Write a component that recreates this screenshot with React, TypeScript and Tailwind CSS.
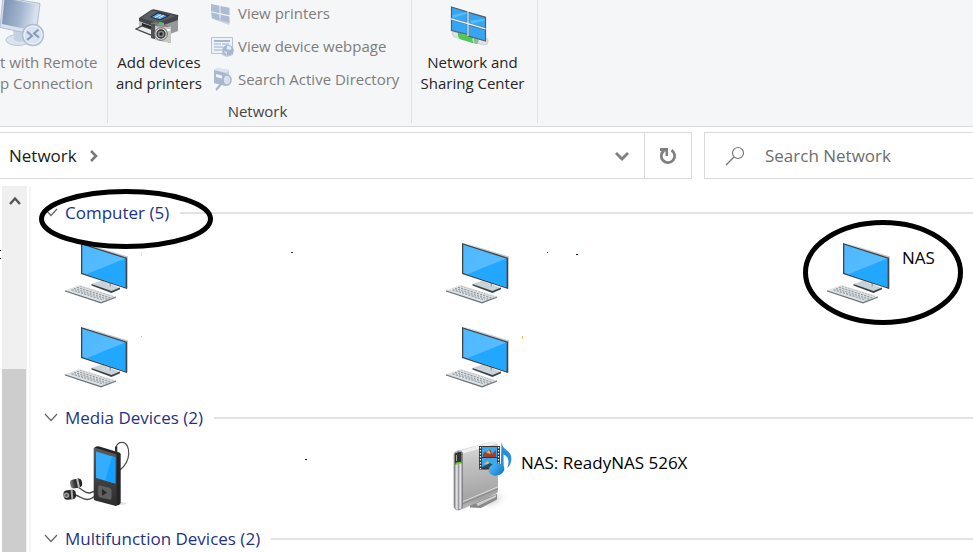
import type { ReactNode } from 'react'

interface Speck {
  x: number
  y: number
  w: number
  h: number
  color: string
}

interface DeviceItem {
  id: string
  icon: 'computer' | 'player' | 'server'
  label?: string
  circled?: boolean
  specks?: Speck[]
}

interface DeviceGroup {
  title: string
  count: number
  circled?: boolean
  items: DeviceItem[]
}

const groups: DeviceGroup[] = [
  {
    title: 'Computer',
    count: 5,
    circled: true,
    items: [
      {
        id: 'pc-1',
        icon: 'computer',
        specks: [
          { x: 79, y: 21, w: 1, h: 4, color: '#ffdf9e' },
          { x: 229, y: 21, w: 2, h: 1, color: '#1f1f6b' },
        ],
      },
      {
        id: 'pc-2',
        icon: 'computer',
        specks: [
          { x: 104, y: 21, w: 1, h: 1, color: '#5a1a00' },
          { x: 133, y: 23, w: 2, h: 1, color: '#200000' },
        ],
      },
      { id: 'pc-3', icon: 'computer', label: 'NAS', circled: true },
      { id: 'pc-4', icon: 'computer', specks: [{ x: 79, y: 21, w: 1, h: 1, color: '#f0b088' }] },
      { id: 'pc-5', icon: 'computer', specks: [{ x: 79, y: 21, w: 1, h: 3, color: '#ffb65c' }] },
    ],
  },
  {
    title: 'Media Devices',
    count: 2,
    items: [
      { id: 'media-1', icon: 'player', specks: [{ x: 243, y: 23, w: 2, h: 1, color: '#1a1a1a' }] },
      { id: 'media-2', icon: 'server', label: 'NAS: ReadyNAS 526X' },
    ],
  },
  { title: 'Multifunction Devices', count: 2, items: [] },
]

function ComputerIcon() {
  return (
    <svg viewBox="0 0 72 72" className="size-[72px] shrink-0 overflow-visible" aria-hidden="true">
      <defs>
        <linearGradient id="pcScreen" x1="0" y1="0" x2="1" y2="1">
          <stop offset="0" stopColor="#4db8ff" />
          <stop offset="1" stopColor="#5cbeff" />
        </linearGradient>
      </defs>
      <path d="M20.500 4.500 66 18.500V50.500L64 51V20.500Z" fill="#c3c8cb" />
      <path d="m29.500 46 10-3.500 18.500 7.500-8.500 4Z" fill="#c9d3d8" />
      <path d="m29.500 46 20 7 8.500-3.500v1.700L49.500 55 29.500 47.500Z" fill="#39434a" />
      <path d="m44 42 6 2v5l-4-1Z" fill="#d8dcde" />
      <path d="M47.500 43.500h1.500v5h-1.500z" fill="#98a1a6" />
      <path d="M19 5 65 19.700V51L19 36Z" fill="#3e464c" />
      <path d="m20.300 6.800 43 13.800v28.600l-43-14.200Z" fill="url(#pcScreen)" />
      <path d="M63.300 20.600v28.600l-39-12.900Z" fill="#22a7ff" />
      <path d="m3 52.200 14.500-5.200 36.500 11.500-15 5.500Z" fill="#dfe2e4" />
      <path d="m3 52.200 36 11.800 15-5.500v1.300l-15 5.700L3 53.500Z" fill="#6d777e" />
      <g stroke="#8e979d" strokeWidth="1.200" strokeDasharray="2.200 1.100" fill="none">
        <path d="m15 49.300 34.500 11" />
        <path d="m12 50.500 33.500 10.800" />
        <path d="m9.500 51.700 32 10.300" />
      </g>
      <path d="m18 48.200 33 10.300" stroke="#a9b0b5" strokeWidth=".8" strokeDasharray="2 1" />
    </svg>
  )
}

function PlayerIcon() {
  return (
    <svg viewBox="0 0 72 72" className="size-[72px] shrink-0 overflow-visible" aria-hidden="true">
      <defs>
        <linearGradient id="playerBody" x1="0" y1="0" x2="0" y2="1">
          <stop offset="0" stopColor="#5a5a5a" />
          <stop offset="1" stopColor="#2c2c2c" />
        </linearGradient>
        <linearGradient id="playerBud" x1="0" y1="0" x2="1" y2="0">
          <stop offset="0" stopColor="#8c8c8c" />
          <stop offset="0.400" stopColor="#333" />
          <stop offset="1" stopColor="#222" />
        </linearGradient>
      </defs>
      <ellipse cx="58" cy="60.500" rx="7" ry="1.500" fill="#e4e4e4" />
      <path d="M54 8V4.500C55 0 58-.6 60-.6c5 0 7 6 6.700 11.500C66.500 18 62 23.500 58 27" fill="none" stroke="#4b4b4b" strokeWidth="1.200" />
      <path d="m32 5.500 2-2 2.500-.2L58 9.700l.7 1.500V60l-1.400 1.800-4 1.200Z" fill="#242424" />
      <path d="M31.700 5.500q0-1.200 1.300-.8L53.500 11q1 .4 1 1.500V61.500q0 1.700-1.500 1.300L33 57.500q-1.300-.4-1.300-1.700Z" fill="url(#playerBody)" />
      <path d="m34 8.500 19.300 5.700v26.200L34 35Z" fill="#35adff" />
      <path d="m50 13.300 3.300.9v26.200l-10-2.800Z" fill="#149fff" />
      <path d="M53 3.500h2.300v7H53z" fill="#333" />
      <path d="m38 42.500 9.500 2.300q2 .5 2 2.500v7.500q0 2.300-2.200 1.800l-9-2.200q-2.200-.6-2.200-2.600v-7.300q0-2.400 1.900-2Z" fill="#606060" />
      <path d="m40 45.800 5 4-5 3Z" fill="#292929" />
      <path d="M15 44c6 2 7 6 12 6 3 0 3-1.500 5-1.500M13 52c5 1 7 4.500 12 4.500 4 0 5-2 7-2.500" fill="none" stroke="#444" strokeWidth="1.300" />
      <g transform="rotate(-12 14 40)">
        <rect x="8" y="36" width="12" height="9" rx="4" fill="url(#playerBud)" />
        <path d="M15 36h2v9h-2z" fill="#b9b9b9" />
      </g>
      <g transform="rotate(-5 8 52)">
        <rect x="1.500" y="47" width="12.500" height="9.500" rx="4" fill="#292929" />
        <path d="M9 47h2v9H9z" fill="#aaa" />
        <circle cx="4.500" cy="52" r="2.800" fill="#999" />
        <circle cx="4.300" cy="52" r="1.200" fill="#555" />
      </g>
    </svg>
  )
}

function ServerIcon() {
  return (
    <svg viewBox="0 0 72 72" className="size-[72px] shrink-0 overflow-visible" aria-hidden="true">
      <defs>
        <linearGradient id="serverSide" x1="0.500" y1="0" x2="0.600" y2="1">
          <stop offset="0" stopColor="#dedede" />
          <stop offset="0.300" stopColor="#c2c2c2" />
          <stop offset="0.850" stopColor="#a2a2a2" />
          <stop offset="1" stopColor="#c8c8c8" />
        </linearGradient>
        <linearGradient id="serverFront" x1="0" y1="0" x2="1" y2="0">
          <stop offset="0" stopColor="#777" />
          <stop offset="0.350" stopColor="#f4f4f8" />
          <stop offset="0.500" stopColor="#9292a0" />
          <stop offset="0.750" stopColor="#e8e8ee" />
          <stop offset="1" stopColor="#808080" />
        </linearGradient>
        <linearGradient id="noteFill" x1="0" y1="0" x2="1" y2="1">
          <stop offset="0" stopColor="#5fc0f7" />
          <stop offset="1" stopColor="#0872c4" />
        </linearGradient>
        <radialGradient id="serverShade">
          <stop offset="0" stopColor="#aaa" />
          <stop offset="1" stopColor="#fff" stopOpacity="0" />
        </radialGradient>
      </defs>
      <ellipse cx="45" cy="55" rx="21" ry="13" fill="url(#serverShade)" />
      <path d="m27 62 27-11v5.500l-16 8.500-11-.5Z" fill="#898989" />
      <path d="m33 60.500 20-8.500v2l-18 9Z" fill="#cdcdcd" />
      <path d="M11 10.500q1-2 4-3L46-1q4-1 8 1l1 2v45.500q0 2-2 3L19 66.500Z" fill="url(#serverSide)" />
      <path d="M13 9 47-1q4-.6 7.300 1.500L20 10.500Z" fill="#f0f0f0" />
      <path d="m20 58.500 35-14.700" stroke="#ddd" strokeWidth="1" />
      <path d="m20 60.500 35-14.700" stroke="#808080" strokeWidth=".8" />
      <path d="M11 11.500q0-2.500 4-3.500 4-.8 4.500 2V63q0 4-4 4-4.500 0-4.500-4.500Z" fill="url(#serverFront)" stroke="#777" strokeWidth=".6" />
      <path d="M12 10.500q2-2 6.500-1.500V20l-6.500 1.500Z" fill="#333" />
      <path d="M13.500 12v6" stroke="#aaa" />
      <path d="m12.500 19.800 5.500-1v2l-5.500 1Z" fill="#68db20" />
      <path d="M36 3h21v23.500H36z" fill="#343434" />
      <path d="M39 4h15v10H39zM39 15h15v10H39z" fill="#3ca8eb" />
      <path d="M40 11q3-5 4 0l3-5 2 5 4-4v7H40Z" fill="#a93c28" />
      <path d="m44 10 2-3 2 4Zm-3 11 4-3 2 4Z" fill="#f1bd36" />
      <path d="m39 24 8-4 6 4v1H39Z" fill="#244e63" />
      <path d="M37.500 4v22M55.500 4v22" stroke="#eee" strokeWidth="1.300" strokeDasharray="1.500 1.500" />
      <path d="M58.500-1.500C59 8 69 7 68.300 16c-.2 4-1.500 7-4 9 2-6 2-11-3.800-13.500L60.700 26h-3Z" fill="#268fda" />
      <ellipse cx="53.500" cy="26.500" rx="8" ry="6" transform="rotate(-15 53.500 26.500)" fill="url(#noteFill)" />
    </svg>
  )
}

const deviceIcons = {
  computer: ComputerIcon,
  player: PlayerIcon,
  server: ServerIcon,
}

function RemoteDesktopIcon() {
  return (
    <svg viewBox="0 0 44 52" className="h-[52px] w-[44px]" aria-hidden="true">
      <defs>
        <linearGradient id="remoteScreen" x1="0" y1="0.400" x2="1" y2="0.600">
          <stop offset="0" stopColor="#7d93b5" />
          <stop offset="0.550" stopColor="#a3b5cf" />
          <stop offset="1" stopColor="#dce4f0" />
        </linearGradient>
      </defs>
      <ellipse cx="18" cy="40" rx="12" ry="5.500" fill="#dbe3ef" stroke="#bac7db" />
      <path d="m13 28 11 3 1 10q-6 2-11-1Z" fill="#c5d0e1" />
      <path d="M3-3 40 3.500 36 35 0 27.500Z" fill="#d9e1ed" stroke="#b0bed3" />
      <path d="M4.500-2 36 4.500 33 30.500 2 24Z" fill="url(#remoteScreen)" />
      <circle cx="33" cy="35" r="10.500" fill="#d9e2ef" stroke="#aebdd5" strokeWidth="1.500" />
      <circle cx="33" cy="35" r="9" fill="none" stroke="#f0f4fa" />
      <path d="m27 31.500 5 4.500-5 4M38.500 29.500l-4.500 4 5 4" fill="none" stroke="#8799b9" strokeWidth="2" />
    </svg>
  )
}

function DevicesPrintersIcon() {
  return (
    <svg viewBox="0 0 48 52" className="h-[52px] w-[48px]" aria-hidden="true">
      <path d="m4 20 18 6v12L4 31Z" fill="#bdbdbd" />
      <path d="m22 26 21-7v12l-21 8Z" fill="#989898" />
      <path d="m4 18 12-8q2-1 4-.5L43 15q1 1 0 2v3l-20 7q-2 .5-4-.2L4 21Z" fill="#424549" />
      <path d="m6 18 11-7.500L41 16l-19 7Z" fill="#5a5e62" />
      <path d="m15 17 8-5 12 3.500-10 5Z" fill="#202c3a" />
      <path d="m17 17 6-3.500 9 2.500-7 3.300Z" fill="#62a8e8" />
      <path d="m20 17.500 6-3M24 18l5-3" stroke="#d7efff" strokeWidth="1" />
      <path d="m7 23 14 5v5L7 28Z" fill="#25282b" />
      <path d="m1 29 6-3 14 5v2l-5 2Z" fill="#ececec" stroke="#424242" strokeWidth="1.300" />
      <path d="m16 23 5-1 15 5v16l-20-5Z" fill="#797b7e" />
      <path d="m20 26 13 1 3-1v17l-16-3Z" fill="#c7c7c4" />
      <path d="M16 24h4v15l-4-1Z" fill="#505356" />
      <path d="m22 25 4-3 3 1v3Z" fill="#94979a" />
      <circle cx="25" cy="23" r="1.200" fill="#29d629" />
      <circle cx="26" cy="34" r="6.300" fill="#dfdfdf" stroke="#666" />
      <circle cx="26" cy="34" r="4" fill="#858b8d" stroke="#303030" strokeWidth="1.300" />
      <circle cx="26" cy="34" r="1.700" fill="#202426" />
      <path d="M32 29h3v2h-3z" fill="#fff" />
    </svg>
  )
}

function SharingCenterIcon() {
  return (
    <svg viewBox="0 0 48 52" className="h-[52px] w-[48px]" aria-hidden="true">
      <path d="M4 34q0-2 3-2l31 6q3 1 2 4-.5 3-4 3L6 37Z" fill="#e0e2e3" stroke="#c1c5c7" strokeWidth=".7" />
      <path d="M10 33q1-2 4-1l12 3q-3 5 0 8.500L13 39.500q-4-2-3-6.500Z" fill="#4fc858" />
      <path d="m13 33 12 3" stroke="#96e79a" strokeWidth="1.500" />
      <ellipse cx="28" cy="40" rx="2.500" ry="4" fill="#8abf9a" />
      <path d="m3.500 7 16 5v11l-16-4ZM20.500 12.300l17 5v11l-17-4.500ZM3.500 19.500l16 4.500v10.500l-16-4ZM20.500 24.700l17 5V41l-17-5Z" fill="#35a5f4" stroke="#51616b" strokeWidth="1.200" />
      <path d="m4.500 15 14-3v2l-14 4ZM21.500 21l15-2.500v2.500l-12 2.500Z" fill="#55bcff" />
      <path d="M20 10v26M3 18.900l16 4.500 18.500 5.500" fill="none" stroke="#f5f6f7" strokeWidth="1.200" />
    </svg>
  )
}

function ViewPrintersIcon() {
  return (
    <svg viewBox="0 0 24 24" className="size-6" aria-hidden="true">
      <path d="m2 15 17 5v3.500L4 18Z" fill="#d0d9e6" stroke="#bac8da" strokeWidth=".6" />
      <path d="m1 3 8.500 1.700v7.500L1 10.300ZM10.500 5l9 1.800v7.500l-9-2ZM1 11.300l8.500 2v6.200L2 17.500ZM10.500 13.500l9 2v6.500l-9-2.500Z" fill="#acbcd3" />
    </svg>
  )
}

function DeviceWebpageIcon() {
  return (
    <svg viewBox="0 0 24 24" className="size-6" aria-hidden="true">
      <path d="M1.500 3.500h21v16h-21z" fill="#edf2f8" stroke="#b8c5d8" />
      <path d="M4 7h16" stroke="#8fa4c1" strokeWidth="1.500" />
      <path d="M4 10h7m1 0h7M4 13h9M4 16h8" stroke="#9db0ca" />
      <circle cx="18" cy="16.500" r="5.800" fill="#a6b8d0" />
      <path d="M17 12q4-1 4.500 3l-2 1-3-1ZM14 17l3 1v3Z" fill="#e1e9f2" />
      <path d="M12 20q5 4 11 0" fill="none" stroke="#bdc9da" strokeWidth="1.500" />
    </svg>
  )
}

function DirectoryIcon() {
  return (
    <svg viewBox="0 0 24 24" className="size-6" aria-hidden="true">
      <path d="m4 3 3-2 12 2v15l-3 1-12-3Z" fill="#c1ccdc" />
      <path d="m4 3 12 3v13L4 16Z" fill="#a8b8cf" />
      <path d="m7 1 12 2-2 3L4 3Z" fill="#dde5ef" />
      <path d="m6 7 6 1.500v3L6 10Z" fill="#edf2f8" />
      <path d="m11 17-5 6" stroke="#a6b5ca" strokeWidth="2" />
      <ellipse cx="17" cy="13" rx="4" ry="5" fill="#d6dfeb" stroke="#a8b7cc" strokeWidth="1.500" />
    </svg>
  )
}

function BigButton({ icon, lines, disabled }: { icon: ReactNode; lines: [string, string]; disabled?: boolean }) {
  return (
    <button
      type="button"
      disabled={disabled}
      className="flex shrink-0 flex-col items-center text-[15px] leading-[21px] whitespace-nowrap text-[#262626] disabled:items-start disabled:text-[#7d7d7d]"
    >
      {icon}
      <span>{lines[0]}</span>
      <span>{lines[1]}</span>
    </button>
  )
}

function SmallButton({ icon, label }: { icon: ReactNode; label: string }) {
  return (
    <button type="button" disabled className="flex h-6 items-center gap-1 text-[15px] whitespace-nowrap text-[#7d7d7d]">
      {icon}
      {label}
    </button>
  )
}

function Ribbon() {
  return (
    <div className="flex h-[127px] shrink-0 border-b border-[#d9dadb] bg-[#f5f6f7] pb-[3px]">
      <div className="flex w-[108px] shrink-0 border-r border-[#e1e2e3]">
        <BigButton icon={<RemoteDesktopIcon />} lines={['t with Remote', 'p Connection']} disabled />
      </div>
      <div className="flex w-[304px] shrink-0 flex-col border-r border-[#e1e2e3]">
        <div className="flex gap-2 pl-2">
          <BigButton icon={<DevicesPrintersIcon />} lines={['Add devices', 'and printers']} />
          <div className="flex flex-col gap-[9px] pt-px">
            <SmallButton icon={<ViewPrintersIcon />} label="View printers" />
            <SmallButton icon={<DeviceWebpageIcon />} label="View device webpage" />
            <SmallButton icon={<DirectoryIcon />} label="Search Active Directory" />
          </div>
        </div>
        <div className="mt-auto pr-1 text-center text-[15px] leading-6 text-[#444]">Network</div>
      </div>
      <div className="flex w-[126px] shrink-0 justify-center border-r border-[#e1e2e3] pr-1">
        <BigButton icon={<SharingCenterIcon />} lines={['Network and', 'Sharing Center']} />
      </div>
    </div>
  )
}

function AddressBar() {
  return (
    <div className="flex shrink-0 gap-3 py-[5px]">
      <div className="flex h-[47px] w-[692px] shrink items-stretch border border-l-0 border-[#d9d9d9]">
        <nav aria-label="Address" className="flex flex-1 items-center gap-3 pl-[9px]">
          <a href="#network" className="text-[17px] text-[#1a1a1a]">
            Network
          </a>
          <svg viewBox="0 0 10 12" className="h-3 w-[10px]" aria-hidden="true">
            <path d="m2 1 5 5-5 5" fill="none" stroke="#7a7a7a" strokeWidth="2.600" />
          </svg>
        </nav>
        <button type="button" aria-label="Previous locations" className="flex w-11 items-center justify-center">
          <svg viewBox="0 0 16 12" className="h-3 w-4" aria-hidden="true">
            <path d="m2 3 6 6 6-6" fill="none" stroke="#808080" strokeWidth="2.800" />
          </svg>
        </button>
        <button type="button" aria-label="Refresh" className="flex w-[47px] items-center justify-center border-l border-[#d9d9d9]">
          <svg viewBox="0 0 18 18" className="size-[18px]" aria-hidden="true">
            <path d="M12.500 3.200a6.700 6.700 0 1 1-7.500.3" fill="none" stroke="#808080" strokeWidth="2.800" />
            <path d="M1 1h8v8H6.500V4.500L1 4Z" fill="#808080" />
          </svg>
        </button>
      </div>
      <label className="flex h-[47px] min-w-0 flex-1 items-center gap-5 border border-r-0 border-[#d9d9d9] pl-5">
        <svg viewBox="0 0 20 20" className="size-5 shrink-0" aria-hidden="true">
          <circle cx="13" cy="7" r="5.500" fill="none" stroke="#777" strokeWidth="1.200" />
          <path d="M9 11 1 19" stroke="#777" strokeWidth="1.300" />
        </svg>
        <input
          type="search"
          aria-label="Search Network"
          placeholder="Search Network"
          className="min-w-0 flex-1 bg-transparent text-[17px] outline-none placeholder:text-[#6d6d6d]"
        />
      </label>
    </div>
  )
}

// Hand-drawn ring used to call out a group or a device
function Ring({ width, height, className }: { width: number; height: number; className: string }) {
  return (
    <svg viewBox={`0 0 ${width} ${height}`} className={`pointer-events-none absolute z-10 ${className}`} aria-hidden="true">
      <ellipse
        cx={width / 2}
        cy={height / 2}
        rx={width / 2 - 2.5}
        ry={height / 2 - 2.5}
        fill="none"
        stroke="#000"
        strokeWidth="5"
      />
    </svg>
  )
}

function Device({ item }: { item: DeviceItem }) {
  const Icon = deviceIcons[item.icon]
  return (
    <li className="relative flex h-[84px] items-start gap-[6px] pt-[7px]">
      <Icon />
      {item.label && <span className="pt-2 text-[17px] leading-6 whitespace-nowrap text-black">{item.label}</span>}
      {item.specks?.map((s) => (
        <i
          key={s.x}
          className="absolute"
          style={{ left: s.x, top: s.y, width: s.w, height: s.h, background: s.color }}
        />
      ))}
      {item.circled && <Ring width={160} height={105} className="top-[-11px] left-[-21px] h-[105px] w-[160px]" />}
    </li>
  )
}

function Group({ group }: { group: DeviceGroup }) {
  return (
    <section>
      <div className="relative flex h-[37px] items-center pl-[13px]">
        <button type="button" className="flex items-center gap-[7px] text-[17px] whitespace-nowrap text-[#1e3287]">
          <svg viewBox="0 0 14 10" className="h-[10px] w-[14px]" aria-hidden="true">
            <path d="m1 1 6 6.500L13 1" fill="none" stroke="#666" strokeWidth="1.200" />
          </svg>
          {group.title} ({group.count})
        </button>
        <div className="ml-[11px] h-[2px] flex-1 bg-[#e2e2e2]" />
        {group.circled && <Ring width={174} height={60} className="top-[-5px] left-[8px] h-[60px] w-[174px]" />}
      </div>
      <ul className="grid grid-cols-[381px_381px_1fr] pl-[31px]">
        {group.items.map((item) => (
          <Device key={item.id} item={item} />
        ))}
      </ul>
    </section>
  )
}

export default function App() {
  return (
    <div className="flex h-screen flex-col overflow-hidden bg-white font-['Open_Sans','Noto_Sans',sans-serif]">
      <Ribbon />
      <AddressBar />
      <div className="flex min-h-0 flex-1 pt-[2px]">
        <div className="flex w-[2px] shrink-0 flex-col gap-[7px] pt-16" aria-hidden="true">
          <i className="h-px w-px bg-black" />
          <i className="h-px w-px bg-black" />
        </div>
        <div className="flex w-[25px] shrink-0 flex-col bg-[#f0f0f0]">
          <button type="button" aria-label="Scroll up" className="flex h-[30px] shrink-0 items-center justify-center">
            <svg viewBox="0 0 12 10" className="h-[10px] w-3" aria-hidden="true">
              <path d="m1 8 5-5.500L11 8" fill="none" stroke="#555" strokeWidth="2.400" />
            </svg>
          </button>
          <div className="min-h-0 flex-1" />
          <div className="h-1/2 w-6 bg-[#cdcdcd]" />
        </div>
        <main className="ml-[2px] min-w-0 flex-1 border-l-2 border-[#f5f5f5] pt-2">
          {groups.map((group) => (
            <Group key={group.title} group={group} />
          ))}
        </main>
      </div>
    </div>
  )
}
